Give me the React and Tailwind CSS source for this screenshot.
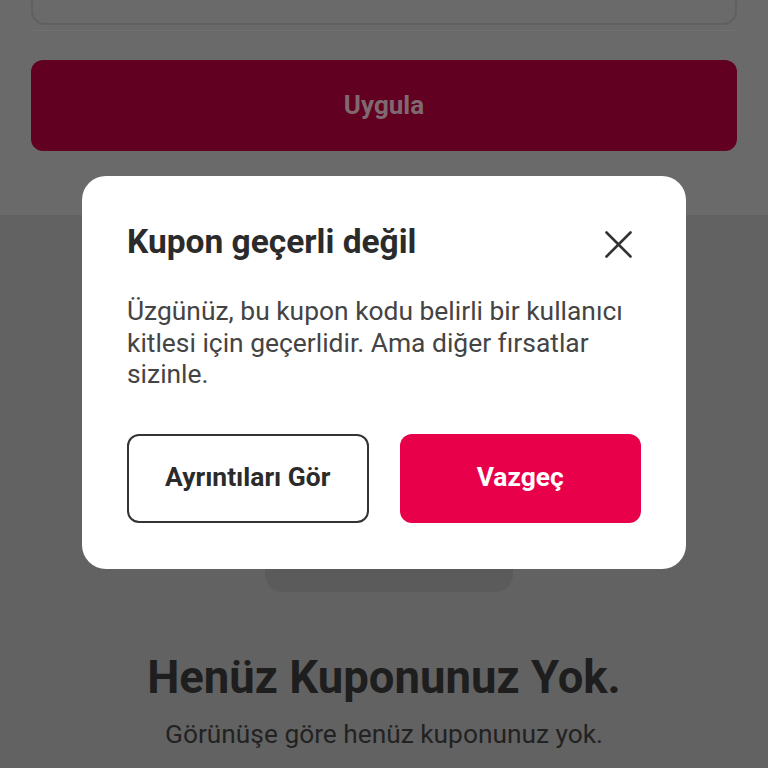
import React from "react";

function CloseIcon() {
  return (
    <svg className="h-[30px] w-[30px]" viewBox="0 0 30 30" fill="none" stroke="#333333" strokeWidth={2.6} strokeLinecap="round">
      <path d="M3.5 3.5L27.5 27.5M27.5 3.5L3.5 27.5" />
    </svg>
  );
}

function CouponDialog() {
  return (
    <div className="absolute left-[82px] top-[176px] w-[604px] rounded-[24px] bg-white px-[45px] pt-[48px] pb-[46px]">
      {/* Header */}
      <div className="flex items-center justify-between">
        <h2 className="text-[33.5px] font-bold leading-[36px] text-[#2b2b2b]">Kupon geçerli değil</h2>
        <button className="mr-[8px] mt-[3px] flex items-center justify-center">
          <CloseIcon />
        </button>
      </div>

      <p className="mt-[36px] text-[26.4px] leading-[31.5px] text-[#444444]">
        Üzgünüz, bu kupon kodu belirli bir kullanıcı kitlesi için geçerlidir. Ama diğer fırsatlar sizinle.
      </p>

      {/* Actions */}
      <div className="mt-[43px] grid grid-cols-2 gap-[31px]">
        <button className="h-[89px] rounded-[12px] border-2 border-[#333333] text-[26.4px] font-bold text-[#2b2b2b]">
          Ayrıntıları Gör
        </button>
        <button className="h-[89px] rounded-[12px] bg-[#e8004a] text-[26.4px] font-bold text-white">
          Vazgeç
        </button>
      </div>
    </div>
  );
}

export default function App() {
  return (
    <div className="relative h-[768px] w-[768px] overflow-hidden bg-[#626262] font-['Roboto',sans-serif]">
      {/* Coupon entry card */}
      <div className="flex h-[215px] flex-col bg-[#6a6a6a] px-[31px]">
        <div className="mt-[-40px] h-[65px] shrink-0 rounded-[14px] border-2 border-[#606060] bg-[#6a6a6a]" />
        <div className="mt-[5px] h-px shrink-0 bg-[#707070]" />
        <button className="mt-[29px] flex h-[91px] w-full shrink-0 items-center justify-center rounded-[12px] bg-[#610020] text-[26px] font-bold text-[#7f6970]">
          Uygula
        </button>
      </div>

      {/* Empty state */}
      <div className="flex flex-col items-center">
        <div className="ml-[10px] mt-[85px] h-[292px] w-[248px] rounded-b-[18px] bg-[#5b5b5b]" />
        <h1 className="mt-[59px] text-[45.5px] font-bold leading-[54px] text-[#1e1e1e]">Henüz Kuponunuz Yok.</h1>
        <p className="mt-[13px] text-[26.3px] leading-[32px] text-[#222222]">Görünüşe göre henüz kuponunuz yok.</p>
      </div>

      <CouponDialog />
    </div>
  );
}
